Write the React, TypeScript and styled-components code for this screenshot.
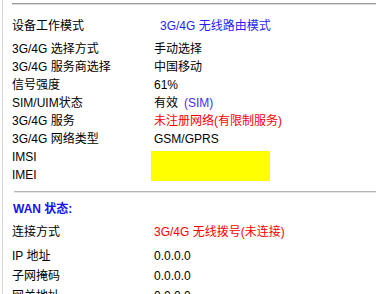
import React from "react"
import styled, { createGlobalStyle } from "styled-components"

const GlobalStyle = createGlobalStyle`
  html, body {
    margin: 0;
    padding: 0;
    background: #fff;
  }
  body {
    font-family: "Liberation Sans", Arial, "Noto Sans CJK SC", sans-serif;
    font-size: 12px;
    color: #000;
  }
`

const Frame = styled.div`
  margin-left: 2px;
  border-left: 1px solid #d6d6d6;
  height: 294px;
  overflow: hidden;
  padding-top: 3px;
  box-sizing: border-box;
`

const Rule = styled.div<{ $left: number; $double?: boolean }>`
  margin-left: ${p => p.$left}px;
  border-top: 1px solid ${p => (p.$double ? "#9a9a9a" : "#b4b4b4")};
  border-bottom: 1px solid ${p => (p.$double ? "#dcdcdc" : "#e6e6e6")};
`

const Table = styled.table`
  border-collapse: collapse;
  margin-left: 9px;
  td {
    padding: 0;
    height: 18px;
    line-height: 14px;
    white-space: nowrap;
    vertical-align: middle;
  }
`

const Label = styled.td<{ $tall?: boolean }>`
  width: 142px;
  height: ${p => (p.$tall ? 20 : 18)}px !important;
`

const Value = styled.td<{ $color?: string; $shift?: number }>`
  color: ${p => p.$color || "#000"};
  padding-left: ${p => p.$shift || 0}px !important;
`

const Hint = styled.span`
  color: #4a2cf0;
  margin-left: 6px;
`

const Masked = styled.td`
  div {
    width: 119px;
    height: 30px;
    margin-left: -3px;
    background: #ffff00;
  }
`

const Heading = styled.div`
  margin: 7px 0 0 10px;
  height: 18px;
  line-height: 18px;
  font-weight: bold;
  color: #1414ee;
`

const info: [string, string][] = [
  ["3G/4G 选择方式", "手动选择"],
  ["3G/4G 服务商选择", "中国移动"],
  ["信号强度", "61%"],
]

const App = () => (
  <>
    <GlobalStyle />
    <Frame>
      <Rule $left={9} $double />
      <Table style={{ marginTop: 12 }}>
        <tbody>
          <tr>
            <Label>设备工作模式</Label>
            <Value $color="#1f1ff5" $shift={6}>3G/4G 无线路由模式</Value>
          </tr>
        </tbody>
      </Table>
      <Table style={{ marginTop: 5 }}>
        <tbody>
          {info.map(([k, v]) => (
            <tr key={k}>
              <Label>{k}</Label>
              <Value>{v}</Value>
            </tr>
          ))}
          <tr>
            <Label>SIM/UIM状态</Label>
            <Value>
              有效<Hint>(SIM)</Hint>
            </Value>
          </tr>
          <tr>
            <Label>3G/4G 服务</Label>
            <Value $color="#ff0000">未注册网络(有限制服务)</Value>
          </tr>
          <tr>
            <Label>3G/4G 网络类型</Label>
            <Value>GSM/GPRS</Value>
          </tr>
          <tr>
            <Label>IMSI</Label>
            <Masked rowSpan={2}>
              <div />
            </Masked>
          </tr>
          <tr>
            <Label>IMEI</Label>
          </tr>
        </tbody>
      </Table>
      <Rule $left={11} style={{ marginTop: 7 }} />
      <Heading>WAN 状态:</Heading>
      <Table style={{ marginTop: 5 }}>
        <tbody>
          <tr>
            <Label>连接方式</Label>
            <Value $color="#ff0000">3G/4G 无线拨号(未连接)</Value>
          </tr>
        </tbody>
      </Table>
      <Table style={{ marginTop: 5 }}>
        <tbody>
          <tr>
            <Label $tall>IP 地址</Label>
            <Value>0.0.0.0</Value>
          </tr>
          <tr>
            <Label $tall>子网掩码</Label>
            <Value>0.0.0.0</Value>
          </tr>
          <tr>
            <Label $tall>网关地址</Label>
            <Value>0.0.0.0</Value>
          </tr>
        </tbody>
      </Table>
    </Frame>
  </>
)

export default App
